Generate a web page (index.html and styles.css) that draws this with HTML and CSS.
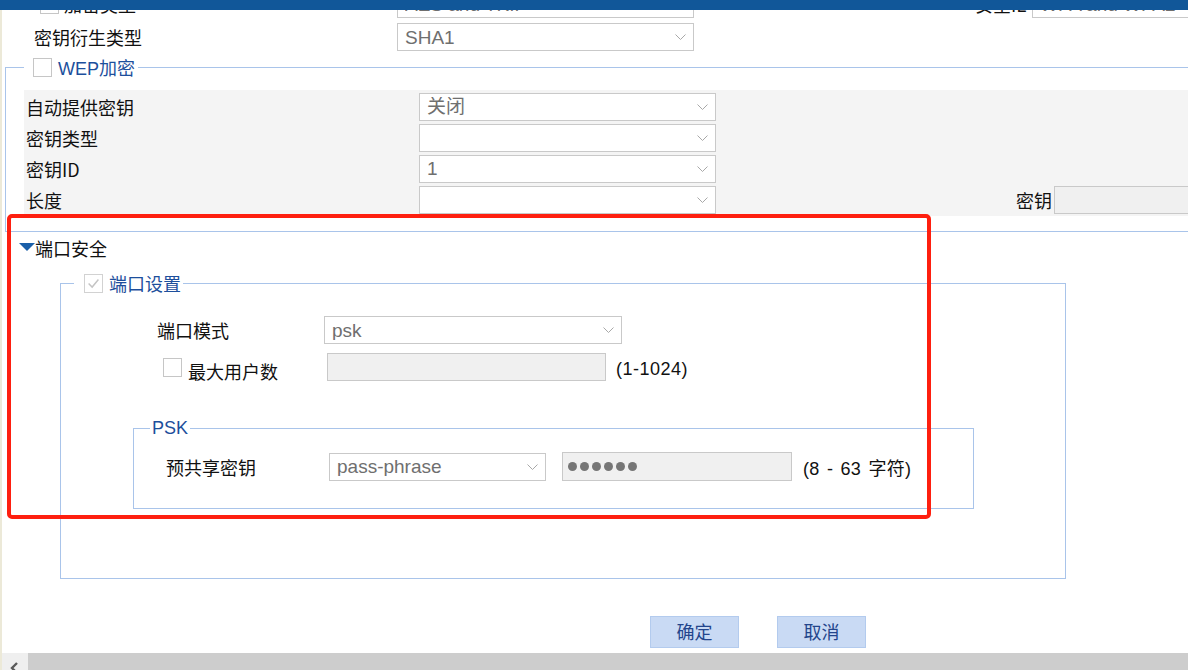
FILE: index.html
```html
<!DOCTYPE html>
<html lang="zh-CN">
<head>
<meta charset="utf-8">
<title>端口安全</title>
<link rel="stylesheet" href="styles.css">
</head>
<body>
<div class="topbar"></div>
<div class="page">
  <div class="toprows">
    <div class="row">
      <div class="lbl lbl-cb"><span class="cb"></span><span>加密类型</span></div>
      <div class="sel w297"><span class="val">AES and TKIP</span><svg class="chev" viewBox="0 0 11 6"><polyline points="0.5,0.5 5.5,5.5 10.5,0.5"/></svg></div>
      <div class="rlbl">安全IE</div>
      <div class="sel wright"><span class="val">WPA and WPA2</span></div>
    </div>
    <div class="row">
      <div class="lbl lbl-2">密钥衍生类型</div>
      <div class="sel w297"><span class="val">SHA1</span><svg class="chev" viewBox="0 0 11 6"><polyline points="0.5,0.5 5.5,5.5 10.5,0.5"/></svg></div>
    </div>
  </div>

  <fieldset class="fs fs-wep">
    <legend><span class="cb"></span><span class="lgtext">WEP加密</span></legend>
    <div class="wep-grid">
      <div class="wrow">
        <div class="wlbl">自动提供密钥</div>
        <div class="sel w297"><span class="val">关闭</span><svg class="chev" viewBox="0 0 11 6"><polyline points="0.5,0.5 5.5,5.5 10.5,0.5"/></svg></div>
      </div>
      <div class="wrow">
        <div class="wlbl">密钥类型</div>
        <div class="sel w297"><span class="val"></span><svg class="chev" viewBox="0 0 11 6"><polyline points="0.5,0.5 5.5,5.5 10.5,0.5"/></svg></div>
      </div>
      <div class="wrow">
        <div class="wlbl">密钥ID</div>
        <div class="sel w297"><span class="val">1</span><svg class="chev" viewBox="0 0 11 6"><polyline points="0.5,0.5 5.5,5.5 10.5,0.5"/></svg></div>
      </div>
      <div class="wrow">
        <div class="wlbl">长度</div>
        <div class="sel w297"><span class="val"></span><svg class="chev" viewBox="0 0 11 6"><polyline points="0.5,0.5 5.5,5.5 10.5,0.5"/></svg></div>
        <div class="keylbl">密钥</div>
        <div class="inp inp-key"></div>
      </div>
    </div>
  </fieldset>

  <div class="sechead">
    <svg class="tri" viewBox="0 0 16 8"><polygon points="0,0 16,0 8,8"/></svg>
    <span>端口安全</span>
  </div>

  <fieldset class="fs fs-port">
    <legend><span class="cb cb-checked"><svg viewBox="0 0 19 19"><polyline points="4,9.5 8,13.5 15,5"/></svg></span><span class="lgtext">端口设置</span></legend>
    <div class="prow prow1">
      <div class="plbl">端口模式</div>
      <div class="sel w298"><span class="val">psk</span><svg class="chev" viewBox="0 0 11 6"><polyline points="0.5,0.5 5.5,5.5 10.5,0.5"/></svg></div>
    </div>
    <div class="prow prow2">
      <div class="plbl"><span class="cb"></span><span class="shift">最大用户数</span></div>
      <div class="inp inp-max"></div>
      <div class="hint hint1">(1-1024)</div>
    </div>

    <fieldset class="fs fs-psk">
      <legend>PSK</legend>
      <div class="psrow">
        <div class="pslbl">预共享密钥</div>
        <div class="sel w217"><span class="val">pass-phrase</span><svg class="chev" viewBox="0 0 11 6"><polyline points="0.5,0.5 5.5,5.5 10.5,0.5"/></svg></div>
        <div class="inp inp-pw"><span class="dot"></span><span class="dot"></span><span class="dot"></span><span class="dot"></span><span class="dot"></span><span class="dot"></span></div>
        <div class="hint hint2">(8 - 63 字符)</div>
      </div>
    </fieldset>
  </fieldset>

  <div class="btns">
    <button class="btn">确定</button>
    <button class="btn">取消</button>
  </div>
</div>

<div class="redbox"></div>

<div class="hscroll">
  <div class="harrow"><svg viewBox="0 0 12 12"><polyline points="8,2 3,7 8,12"/></svg></div>
</div>
</body>
</html>
```

FILE: styles.css
```css
html, body {
  margin: 0;
  padding: 0;
}
body {
  width: 1188px;
  height: 670px;
  overflow: hidden;
  background: #fff;
  font-family: "Noto Sans CJK SC", "Liberation Sans", sans-serif;
  font-size: 18px;
  color: #111;
  position: relative;
}
.topbar {
  position: fixed;
  top: 0;
  left: 0;
  right: 0;
  height: 10px;
  background: #115799;
  z-index: 5;
}
.page {
  display: flow-root;
  border-left: 2px solid #ece9d8;
  height: 670px;
  box-sizing: border-box;
}

/* generic controls */
.sel {
  box-sizing: border-box;
  height: 28px;
  border: 1px solid #c9c9c9;
  background: #fff;
  display: flex;
  align-items: center;
  padding: 0 7px 0 7px;
  color: #6f6f6f;
  font-family: "Liberation Sans", "Noto Sans CJK SC", sans-serif;
  font-size: 19px;
  flex-shrink: 0;
  line-height: 1;
}
.sel .val { flex: 1; white-space: nowrap; overflow: hidden; }
.chev {
  width: 11px;
  height: 6px;
  flex-shrink: 0;
}
.chev polyline {
  fill: none;
  stroke: #a8a8a8;
  stroke-width: 1;
}
.inp {
  box-sizing: border-box;
  height: 28px;
  border: 1px solid #c9c9c9;
  background: #f0f0f0;
  flex-shrink: 0;
}
.cb {
  box-sizing: border-box;
  width: 19px;
  height: 19px;
  border: 1px solid #c6c6c6;
  background: #fff;
  flex-shrink: 0;
  display: inline-block;
}
.cb-checked {
  border-color: #d2d2d2;
}
.cb-checked svg {
  display: block;
  width: 17px;
  height: 17px;
}
.cb-checked polyline {
  fill: none;
  stroke: #c4c4c4;
  stroke-width: 1.6;
}
.w297 { width: 297px; }
.w298 { width: 298px; }
.w217 { width: 217px; }

/* top rows */
.toprows {
  margin-top: -10px;
  display: flex;
  flex-direction: column;
  gap: 5px;
}
.row {
  display: flex;
  align-items: center;
  height: 28px;
}
.lbl {
  width: 395px;
  flex-shrink: 0;
  box-sizing: border-box;
  line-height: 22px;
}
.lbl-cb {
  padding-left: 38px;
  display: flex;
  align-items: center;
  gap: 5px;
}
.lbl-2 { padding-left: 32px; }
.rlbl {
  margin-left: 281px;
  width: 57px;
  flex-shrink: 0;
  white-space: nowrap;
}
.wright { width: 170px; }

/* fieldsets */
.fs {
  border: 1px solid #a9c4ea;
  margin: 0;
  padding: 0;
  min-width: 0;
}
.fs > legend {
  color: #1d4f9c;
  font-family: "Liberation Sans", "Noto Sans CJK SC", sans-serif;
  font-size: 18px;
}
.lgtext {
  position: relative;
  top: 2px;
}
.fs-wep {
  margin: 6px 0 0 3px;
  padding: 13px 0 15px 18px;
  width: 1250px;
  box-sizing: border-box;
}
.fs-wep > legend {
  padding: 0 3px 0 9px;
  height: 20px;
  display: flex;
  align-items: center;
  gap: 6px;
  line-height: 20px;
}
.wep-grid {
  background: #f4f4f4;
  padding: 1px 0;
}
.wrow {
  display: flex;
  align-items: center;
  height: 31px;
}
.wlbl {
  width: 395px;
  flex-shrink: 0;
  box-sizing: border-box;
  padding-left: 2px;
  line-height: 22px;
}
.keylbl {
  margin-left: 300px;
  width: 38px;
  flex-shrink: 0;
}
.inp-key { width: 160px; }

/* section head */
.sechead {
  margin-top: 5px;
  height: 22px;
  padding-left: 17px;
  display: flex;
  align-items: center;
  line-height: 22px;
}
.tri {
  width: 16px;
  height: 8px;
  margin-top: -2px;
}
.tri polygon { fill: #1a5fa8; }

/* port fieldset */
.fs-port {
  margin: 14px 0 0 58px;
  width: 1006px;
  box-sizing: border-box;
  padding: 23px 0 69px 13px;
}
.fs-port > legend {
  padding: 0 2px 0 10px;
  height: 20px;
  display: flex;
  align-items: center;
  gap: 6px;
  line-height: 20px;
}
.prow {
  display: flex;
  align-items: center;
  height: 28px;
}
.prow1 { margin-left: 83px; }
.prow1 .plbl { width: 167px; flex-shrink: 0; }
.prow2 { margin-left: 89px; margin-top: 9px; }
.prow2 .plbl {
  width: 164px;
  flex-shrink: 0;
  display: flex;
  align-items: center;
  gap: 6px;
}
.shift { position: relative; top: 4px; }
.inp-max { width: 279px; }
.hint {
  margin-left: 10px;
  font-family: "Liberation Sans", "Noto Sans CJK SC", sans-serif;
  font-size: 18px;
  white-space: nowrap;
}
.hint1 {
  letter-spacing: 0.5px;
  position: relative;
  top: 2px;
}

/* PSK fieldset */
.fs-psk {
  margin: 36px 0 0 59px;
  width: 841px;
  box-sizing: border-box;
  padding: 13px 0 27px 16px;
}
.fs-psk > legend {
  padding: 0 2px;
  line-height: 22px;
}
.psrow {
  display: flex;
  align-items: center;
  height: 29px;
  margin-left: 16px;
}
.pslbl { width: 163px; flex-shrink: 0; }
.inp-pw {
  width: 230px;
  height: 29px;
  margin-left: 16px;
  display: flex;
  align-items: center;
  gap: 3px;
  padding-left: 5px;
}
.dot {
  width: 9px;
  height: 9px;
  border-radius: 50%;
  background: #767676;
}
.hint2 {
  margin-left: 11px;
  word-spacing: 2px;
  letter-spacing: 0.3px;
}

/* buttons */
.btns {
  margin: 37px 0 0 648px;
  display: flex;
  gap: 38px;
}
.btn {
  box-sizing: border-box;
  width: 89px;
  height: 32px;
  background: #c9daf4;
  border: 1px solid #b3cbee;
  color: #23458c;
  font-family: "Noto Sans CJK SC", sans-serif;
  font-size: 18px;
  padding: 0 0 3px 0;
  line-height: 1;
}

/* annotation */
.redbox {
  position: absolute;
  left: 7px;
  top: 214px;
  width: 924px;
  height: 305px;
  box-sizing: border-box;
  border: 4px solid #fe1f0f;
  border-radius: 5px;
  pointer-events: none;
}

/* scrollbar */
.hscroll {
  position: fixed;
  left: 2px;
  right: 0;
  bottom: 0;
  height: 17px;
  background: #cdcdcd;
  display: flex;
}
.harrow {
  width: 26px;
  height: 17px;
  background: #efefef;
  display: flex;
  justify-content: center;
  align-items: flex-end;
}
.harrow svg {
  width: 12px;
  height: 12px;
  margin-bottom: -3px;
}
.harrow polyline {
  fill: none;
  stroke: #5a5a5a;
  stroke-width: 2.4;
}
```
